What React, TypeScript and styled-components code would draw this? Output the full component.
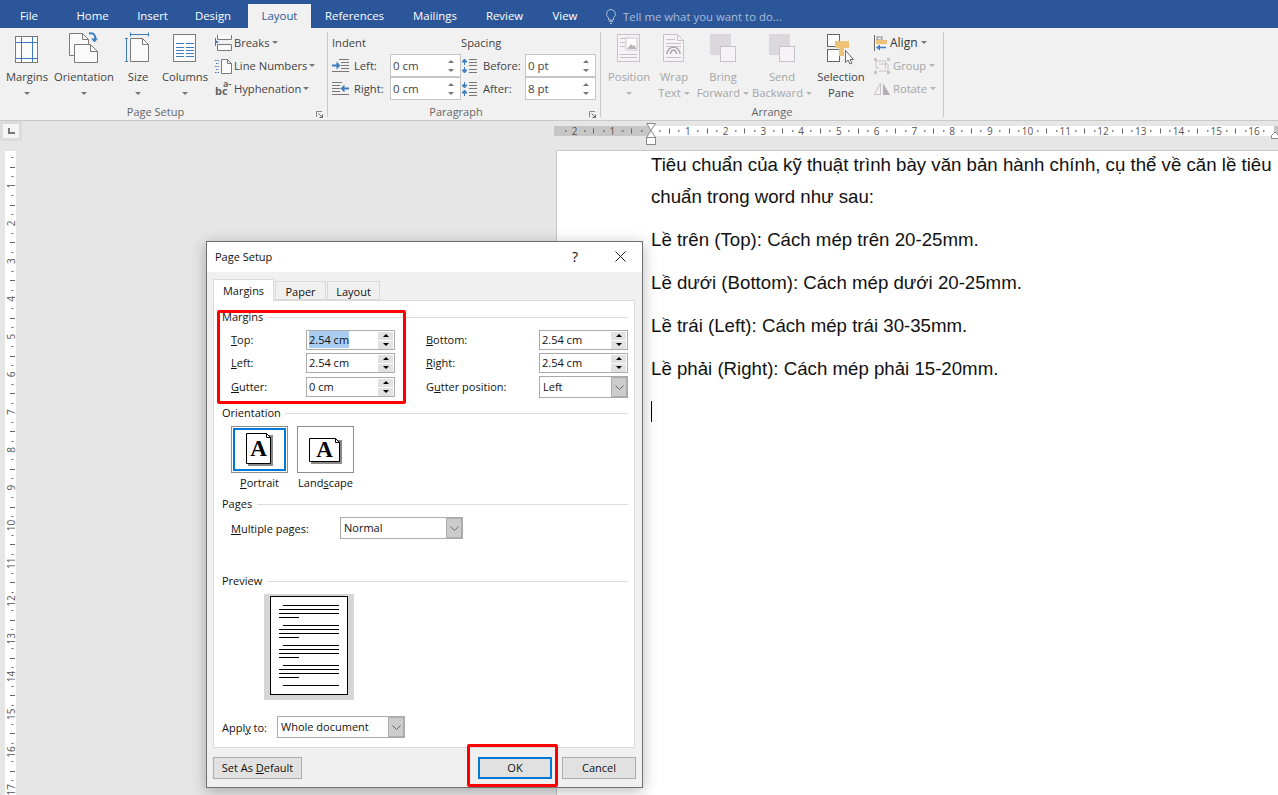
import React from "react";
import styled, { createGlobalStyle } from "styled-components";

const Global = createGlobalStyle`
  html, body { margin: 0; padding: 0; overflow: hidden; }
  body { font-family: "Open Sans", "Liberation Sans", sans-serif; }
  * { box-sizing: border-box; }
  svg { display: block; overflow: visible; }
`;

const Screen = styled.div`
  position: relative;
  width: 1278px;
  height: 795px;
  overflow: hidden;
  display: flex;
  flex-direction: column;
  background: #e6e6e6;
`;

/* ---------- title tabs ---------- */
const TabBar = styled.div`
  height: 28px;
  background: #2b579a;
  display: flex;
  align-items: flex-end;
  font-size: 11.4px;
`;
const RibbonTab = styled.div<{ $w: number; $active?: boolean }>`
  width: ${(p) => p.$w}px;
  height: 24px;
  line-height: 24px;
  text-align: center;
  color: ${(p) => (p.$active ? "#2b579a" : "#fff")};
  background: ${(p) => (p.$active ? "#f1f1f1" : "transparent")};
`;
const TellMe = styled.div`
  display: flex;
  align-items: center;
  height: 24px;
  gap: 7px;
  margin-left: 13px;
  color: #a9bcd8;
`;

/* ---------- ribbon ---------- */
const Ribbon = styled.div`
  height: 93px;
  background: #f1f1f1;
  border-bottom: 1px solid #c9c9c9;
  display: flex;
  padding-top: 4px;
  font-size: 11.2px;
  color: #444;
`;
const Group = styled.div<{ $w: number }>`
  width: ${(p) => p.$w}px;
  height: 85px;
  border-right: 1px solid #c9c9c9;
  display: flex;
  flex-direction: column;
`;
const GroupBody = styled.div`
  height: 72px;
  display: flex;
`;
const GroupFooter = styled.div`
  height: 13px;
  padding-top: 3px;
  display: flex;
  align-items: center;
`;
const GroupName = styled.div`
  flex: 1;
  text-align: center;
  font-size: 11px;
  line-height: 16px;
  color: #666;
`;
const Launcher = styled.div`
  width: 16px;
  padding-left: 5px;
  margin-top: 4px;
`;
const BigBtn = styled.div<{ $w: number; $off?: boolean }>`
  width: ${(p) => p.$w}px;
  display: flex;
  flex-direction: column;
  align-items: center;
  color: ${(p) => (p.$off ? "#a6a6a6" : "#444")};
  line-height: 16px;
  white-space: nowrap;
`;
const BigIcon = styled.div`
  height: 37px;
`;
const BtnLine = styled.div`
  height: 16px;
  display: flex;
  align-items: center;
  gap: 3px;
`;
const Caret = styled.span<{ $off?: boolean }>`
  display: inline-block;
  width: 0;
  height: 0;
  border-left: 3px solid transparent;
  border-right: 3px solid transparent;
  border-top: 3px solid ${(p) => (p.$off ? "#b5b5b5" : "#777")};
`;
const SmallStack = styled.div<{ $ml: number }>`
  margin-left: ${(p) => p.$ml}px;
  margin-top: -1px;
  display: flex;
  flex-direction: column;
`;
const SmallBtn = styled.div<{ $off?: boolean; $dark?: boolean }>`
  height: 23px;
  display: flex;
  align-items: center;
  gap: ${(p) => (p.$dark || p.$off ? 3 : 2)}px;
  white-space: nowrap;
  font-size: ${(p) => (p.$dark ? 12 : 11.2)}px;
  color: ${(p) => (p.$off ? "#a6a6a6" : p.$dark ? "#333" : "#444")};
`;
const ParaCol = styled.div<{ $w: number; $pl: number }>`
  width: ${(p) => p.$w}px;
  padding-left: ${(p) => p.$pl}px;
  display: flex;
  flex-direction: column;
`;
const ParaHead = styled.div`
  height: 22px;
  line-height: 22px;
`;
const ParaRow = styled.div`
  height: 23px;
  display: flex;
  align-items: center;
`;
const ParaIcon = styled.div<{ $w: number }>`
  width: ${(p) => p.$w}px;
  flex: none;
`;
const ParaLabel = styled.div<{ $w: number }>`
  width: ${(p) => p.$w}px;
  flex: none;
`;
const RibbonSpin = styled.div`
  width: 71px;
  height: 23px;
  background: #fff;
  border: 1px solid #c6c6c6;
  display: flex;
  align-items: center;
  justify-content: space-between;
  padding: 0 6px 0 2px;
  font-size: 11.5px;
  color: #444;
`;
const RibbonArrows = styled.div`
  display: flex;
  flex-direction: column;
  gap: 6px;
`;
const ArrowUp = styled.span<{ $c?: string }>`
  display: block;
  width: 0;
  height: 0;
  border-left: 3px solid transparent;
  border-right: 3px solid transparent;
  border-bottom: 3px solid ${(p) => p.$c || "#777"};
`;
const ArrowDown = styled.span<{ $c?: string }>`
  display: block;
  width: 0;
  height: 0;
  border-left: 3px solid transparent;
  border-right: 3px solid transparent;
  border-top: 3px solid ${(p) => p.$c || "#777"};
`;

/* ---------- workspace ---------- */
const RulerRow = styled.div`
  height: 29px;
  display: flex;
  justify-content: space-between;
`;
const Corner = styled.div`
  width: 22px;
  height: 20px;
  background: #dcdcdc;
  padding: 3px;
`;
const CornerFace = styled.div`
  width: 16px;
  height: 14px;
  background: #f5f5f5;
  display: flex;
  align-items: center;
  justify-content: center;
`;
const WorkBody = styled.div`
  flex: 1;
  display: flex;
  justify-content: space-between;
  min-height: 0;
`;
const VRulerWrap = styled.div`
  margin: 1px 0 0 5px;
  width: 11px;
`;
const Page = styled.div`
  width: 722px;
  background: #fff;
  border-left: 1px solid #c6c6c6;
  border-top: 1px solid #c6c6c6;
  padding-left: 94px;
  font-family: "Liberation Sans", Arial, sans-serif;
  font-size: 18.67px;
  line-height: 32px;
  color: #111;
`;
const DocText = styled.div`
  margin-top: -2px;
  width: 626px;
`;
const Para = styled.p`
  margin: 0 0 11px;
`;
const Cursor = styled.span`
  display: inline-block;
  width: 1px;
  height: 21px;
  margin-bottom: 4px;
  background: #000;
  vertical-align: middle;
`;

/* ---------- dialog ---------- */
const Dialog = styled.div`
  position: absolute;
  left: 206px;
  top: 241px;
  width: 437px;
  height: 547px;
  background: #f0f0f0;
  border: 1px solid #6f6f6f;
  box-shadow: 0 3px 14px rgba(0, 0, 0, 0.28);
  display: flex;
  flex-direction: column;
  font-size: 11px;
  color: #111;
`;
const DlgTitle = styled.div`
  height: 30px;
  flex: none;
  background: #fff;
  display: flex;
  align-items: center;
  padding: 0 0 2px 8px;
`;
const DlgTitleText = styled.div`
  flex: 1;
`;
const Help = styled.div`
  width: 30px;
  text-align: center;
  font-size: 14px;
  margin-right: 15px;
`;
const CloseBox = styled.div`
  width: 30px;
  margin-right: 7px;
  display: flex;
  justify-content: center;
`;
const DlgTabs = styled.div`
  height: 28px;
  flex: none;
  padding: 7px 0 0 6px;
  display: flex;
  align-items: flex-end;
`;
const DlgTab = styled.div<{ $w: number; $active?: boolean }>`
  width: ${(p) => p.$w}px;
  height: ${(p) => (p.$active ? 22 : 19)}px;
  line-height: ${(p) => (p.$active ? 22 : 19)}px;
  text-align: center;
  background: ${(p) => (p.$active ? "#fff" : "#f0f0f0")};
  border: 1px solid #d9d9d9;
  border-bottom: ${(p) => (p.$active ? "none" : "1px solid #d9d9d9")};
  margin-bottom: ${(p) => (p.$active ? -1 : 0)}px;
  margin-left: ${(p) => (p.$active ? 0 : 1)}px;
  position: relative;
  z-index: ${(p) => (p.$active ? 1 : 0)};
`;
const Panel = styled.div`
  height: 448px;
  flex: none;
  margin: 0 7px 0 6px;
  background: #fff;
  border: 1px solid #d9d9d9;
  padding: 8px 6px 0 8px;
  display: flex;
  flex-direction: column;
`;
const Section = styled.div<{ $mt?: number }>`
  height: 16px;
  flex: none;
  display: flex;
  align-items: center;
  gap: 5px;
  line-height: 16px;
  margin-top: ${(p) => p.$mt || 0}px;
  &::after {
    content: "";
    flex: 1;
    height: 1px;
    background: #dcdcdc;
  }
`;
const MarginGrid = styled.div`
  margin-top: 5px;
  padding-left: 9px;
  display: grid;
  grid-template-columns: 75px 89px 31px 113px 89px;
  grid-template-rows: 23px 24px 22px;
  align-items: start;
`;
const FieldLabel = styled.div<{ $col: number }>`
  grid-column: ${(p) => p.$col};
  line-height: 20px;
  white-space: nowrap;
`;
const Spin = styled.div<{ $col: number }>`
  grid-column: ${(p) => p.$col};
  height: 20px;
  border: 1px solid #ababab;
  background: #fff;
  display: flex;
  align-items: center;
  padding-left: 2px;
`;
const SpinValue = styled.div`
  flex: 1;
  padding-bottom: 1px;
`;
const Selected = styled.span`
  background: #a8cdf0;
  padding: 1px 0;
`;
const SpinBtns = styled.div`
  width: 15px;
  margin-right: 1px;
  display: flex;
  flex-direction: column;
  gap: 1px;
`;
const SpinBtn = styled.div`
  height: 8px;
  background: #e1e1e1;
  display: flex;
  align-items: center;
  justify-content: center;
`;
const Combo = styled.div<{ $w: number; $col?: number }>`
  width: ${(p) => p.$w}px;
  height: 22px;
  ${(p) => (p.$col ? `grid-column: ${p.$col}; margin-top: -1px;` : "")}
  border: 1px solid #ababab;
  background: #fff;
  display: flex;
  align-items: center;
  padding-left: 3px;
`;
const ComboText = styled.div`
  flex: 1;
  padding-bottom: 1px;
`;
const ComboBtn = styled.div`
  width: 17px;
  height: 20px;
  background: #ccc;
  border: 1px solid #fff;
  border-width: 0 0 0 1px;
  box-shadow: inset 0 0 0 1px #adadad;
  display: flex;
  align-items: center;
  justify-content: center;
`;
const OrientRow = styled.div`
  margin: 5px 0 0 9px;
  display: flex;
  gap: 9px;
`;
const OrientItem = styled.div`
  width: 57px;
  display: flex;
  flex-direction: column;
  align-items: center;
`;
const OrientBtn = styled.div`
  width: 57px;
  height: 47px;
  border: 1px solid #8f8f8f;
  background: #fff;
  padding: 1px;
  display: flex;
  align-items: center;
  justify-content: center;
`;
const OrientInner = styled.div<{ $sel?: boolean; $pt?: number }>`
  width: 100%;
  height: 100%;
  border: 2px solid ${(p) => (p.$sel ? "#0078d7" : "transparent")};
  padding-top: ${(p) => p.$pt || 0}px;
  display: flex;
  align-items: center;
  justify-content: center;
`;
const OrientLabel = styled.div`
  margin-top: 2px;
  line-height: 16px;
  white-space: nowrap;
`;
const PagesRow = styled.div`
  margin: 5px 0 0 9px;
  display: flex;
  align-items: center;
`;
const RowLabel = styled.div<{ $w: number }>`
  width: ${(p) => p.$w}px;
  flex: none;
`;
const PreviewBox = styled.div`
  margin: 5px 0 0 42px;
  width: 90px;
  height: 106px;
  background: #d6d6d6;
  padding: 2px 0 0 6px;
`;
const PreviewPage = styled.div`
  width: 78px;
  height: 99px;
  background: #fff;
  border: 1px solid #000;
`;
const ApplyRow = styled.div`
  margin-top: 16px;
  display: flex;
  align-items: center;
`;
const DlgFooter = styled.div`
  padding: 9px 6px 0;
  display: flex;
  gap: 10px;
`;
const DlgButton = styled.div<{ $w: number; $primary?: boolean; $right?: boolean }>`
  width: ${(p) => p.$w}px;
  height: 22px;
  background: #e1e1e1;
  border: ${(p) => (p.$primary ? "2px solid #0078d7" : "1px solid #adadad")};
  line-height: ${(p) => (p.$primary ? 18 : 20)}px;
  text-align: center;
  white-space: nowrap;
  ${(p) => (p.$right ? "margin-left: auto;" : "")}
`;
const RedBox = styled.div<{ $l: number; $t: number; $w: number; $h: number }>`
  position: absolute;
  left: ${(p) => p.$l}px;
  top: ${(p) => p.$t}px;
  width: ${(p) => p.$w}px;
  height: ${(p) => p.$h}px;
  border: 3px solid #f00;
  border-radius: 2px;
`;

/* ---------- icons ---------- */
const BLUE = "#3f7cbf";
const GR = "#7a7a7a";
const OFF = "#c9c3c9";

const MarginsIcon = () => (
  <svg width="24" height="30" viewBox="0 0 24 30">
    <rect x=".5" y="4.5" width="22" height="26" fill="#fbfbfb" stroke={GR} />
    <path d="M6.5 5v25M17.5 5v25M1 10.5h21M1 26.5h21" stroke={BLUE} fill="none" />
  </svg>
);
const OrientIcon = () => (
  <svg width="30" height="31" viewBox="0 0 30 31">
    <path d="M.5 1.5h13l6 6v16H.5z" fill="#fafafa" stroke={GR} />
    <path d="M13.5 1.5v6h6" fill="none" stroke={GR} />
    <path d="M5.5 12.5h16l7 7v11h-23z" fill="#fafafa" stroke={GR} />
    <path d="M21.5 12.5v7h7" fill="none" stroke={GR} />
    <path d="M20 1.5c5-1 7 2 6 6" fill="none" stroke={BLUE} strokeWidth="2" />
    <path d="M22 6.5h7l-3.500 4z" fill={BLUE} />
  </svg>
);
const SizeIcon = () => (
  <svg width="26" height="30" viewBox="0 0 26 30">
    <path d="M5.500 2.500h18M5.500.5v4M23.500.5v4M1.500 6.500v23M0 6.500h3M0 29.500h3" stroke={BLUE} fill="none" />
    <path d="M5.500 6.500h12l6 6v17h-18z" fill="#fafafa" stroke={GR} />
    <path d="M17.500 6.500v6h6" fill="none" stroke={GR} />
  </svg>
);
const ColumnsIcon = () => (
  <svg width="24" height="30" viewBox="0 0 24 30">
    <rect x=".5" y="2.500" width="22" height="27" fill="#fbfbfb" stroke={GR} />
    <path d="M3 11.500h8M13 11.500h8M3 15.500h8M13 15.500h8M3 18.500h8M13 18.500h8M3 21.500h8M13 21.500h8M3 24.500h8M13 24.500h8" stroke={BLUE} />
  </svg>
);
const BreaksIcon = () => (
  <svg width="17" height="16" viewBox="0 0 17 16">
    <path d="M2.500 0v4.500h14V0M2.500 15.500V9.500h14v6h-14z" fill="#fafafa" stroke={GR} />
    <path d="M0 5l4 2-4 2z" fill={BLUE} />
    <path d="M.5 3v8" stroke={BLUE} />
  </svg>
);
const LineNumIcon = () => (
  <svg width="17" height="16" viewBox="0 0 17 16">
    <path d="M6.500 1.500h6l4 4v10h-10z" fill="#fafafa" stroke={GR} />
    <path d="M12.500 1.500v4h4" fill="none" stroke={GR} />
    <path d="M0 2.500h4M1 5.500h3M0 8.500h4M1 11.500h3M0 14.500h4" stroke={BLUE} strokeDasharray="1.500 1" />
  </svg>
);
const HyphenIcon = () => (
  <svg width="17" height="17" viewBox="0 0 17 17">
    <text x="0" y="15" fontFamily="Open Sans, sans-serif" fontWeight="700" fontSize="11" fill="#666">bc</text>
    <text x="8" y="7" fontFamily="Open Sans, sans-serif" fontWeight="700" fontSize="9" fill="#666">a-</text>
  </svg>
);
const LauncherIcon = () => (
  <svg width="7" height="7" viewBox="0 0 7 7">
    <path d="M.5 6V.5H6" fill="none" stroke="#888" />
    <path d="M2.500 2.500L6 6M6.500 3.500v3h-3" fill="none" stroke="#666" />
  </svg>
);
const IndentL = () => (
  <svg width="17" height="13" viewBox="0 0 17 13">
    <path d="M7 .5h10M9 3.500h8M9 6.500h8M9 9.500h8M0 12.500h17" stroke="#777" />
    <path d="M0 6.500h5" stroke={BLUE} strokeWidth="2" />
    <path d="M4.500 2.500l4 4-4 4z" fill={BLUE} />
  </svg>
);
const IndentR = () => (
  <svg width="17" height="13" viewBox="0 0 17 13">
    <path d="M0 .5h10M0 3.500h8M0 6.500h8M0 9.500h8M0 12.500h17" stroke="#777" />
    <path d="M12 6.500h5" stroke={BLUE} strokeWidth="2" />
    <path d="M12.500 2.500l-4 4 4 4z" fill={BLUE} />
  </svg>
);
const SpaceIcon = ({ before }: { before: boolean }) => (
  <svg width="16" height="16" viewBox="0 0 16 16">
    <path d="M8 1.500h8M8 4.500h8M8 7.500h8M8 11.500h8M8 14.500h8" stroke="#777" />
    {before ? (
      <path d="M3.500 7V3M3.500 1L6 4H1zM3.500 15l2.500-3H1zM3.500 9v4" fill={BLUE} stroke={BLUE} />
    ) : (
      <path d="M3.500 1v4M3.500 7L6 4H1zM3.500 9L6 12H1zM3.500 11v4" fill={BLUE} stroke={BLUE} />
    )}
  </svg>
);
const PositionIcon = () => (
  <svg width="24" height="30" viewBox="0 0 24 30">
    <rect x=".5" y="2.500" width="22" height="27" fill="#f6f2f6" stroke={OFF} />
    <path d="M3 6.500h6M3 10.500h5M3 14.500h5M3 22.500h17M3 25.500h17" stroke={OFF} />
    <rect x="9" y="6" width="11" height="12" fill="#fff" stroke={OFF} />
    <path d="M10 17l4-5 2 2 1.500-1 2 4z" fill="#bbb4bb" />
  </svg>
);
const WrapIcon = () => (
  <svg width="22" height="30" viewBox="0 0 22 30">
    <path d="M.5 2.500h14l6 6v21H.5z" fill="#f6f2f6" stroke={OFF} />
    <path d="M14.500 2.500v6h6" fill="none" stroke={OFF} />
    <path d="M3 7.500h9M3 11.500h15M3 14.500h15M3 25.500h15" stroke={OFF} />
    <path d="M4 22c0-9 13-9 13 0M7.500 22c0-5 6-5 6 0" fill="none" stroke="#aba5ab" strokeWidth="1.500" />
  </svg>
);
const StackIcon = () => (
  <svg width="27" height="30" viewBox="0 0 27 30">
    <rect x="0" y="2" width="21" height="21" fill="#dbd7db" />
    <rect x="10.500" y="14.500" width="15" height="15" fill="#f6f2f6" stroke={OFF} />
  </svg>
);
const SelPaneIcon = () => (
  <svg width="28" height="32" viewBox="0 0 28 32">
    <rect x=".5" y="2.500" width="12" height="12" fill="#fff" stroke="#666" />
    <rect x=".5" y="17.500" width="12" height="12" fill="#fff" stroke="#666" />
    <path d="M8 9h14v7h-5v8h-5v-8H8z" fill="#ecc378" />
    <path d="M18.500 18.500v12l2.500-2.500 2 4 2-1-2-3.500h3.500z" fill="#fff" stroke="#666" />
  </svg>
);
const AlignIcon = () => (
  <svg width="13" height="16" viewBox="0 0 13 16">
    <path d="M.5 0v16" stroke="#666" />
    <rect x="3" y="2" width="5" height="3" fill="none" stroke="#888" />
    <rect x="2" y="5" width="11" height="4" fill="#ecc378" />
    <path d="M12 12.500H5" stroke={BLUE} strokeWidth="1.500" />
    <path d="M2 12.500l4-3v6z" fill={BLUE} />
  </svg>
);
const GroupIcon = () => (
  <svg width="16" height="16" viewBox="0 0 16 16">
    <path d="M2.500 3h9v7.500M5 13h9M5 6h9v7M2 3v7h3" fill="none" stroke={OFF} />
    <path d="M0 0h3v3H0zM13 0h3v3h-3zM0 13h3v3H0zM13 13h3v3h-3z" fill={OFF} />
  </svg>
);
const RotateIcon = () => (
  <svg width="16" height="13" viewBox="0 0 16 13">
    <path d="M6.500 1L.5 12.500h6z" fill="#f6f2f6" stroke={OFF} />
    <path d="M9 1v12h7z" fill="#b5afb5" />
  </svg>
);
const Bulb = () => (
  <svg width="10" height="15" viewBox="0 0 10 15">
    <path d="M5 .5a4.500 4.500 0 0 0-2.500 8.200V11h5V8.700A4.500 4.500 0 0 0 5 .500zM3 12.500h4M4 14.500h2" fill="none" stroke="#a9bcd8" />
  </svg>
);

const SPIN_ARROW = "#000";
const SpinField = ({ col, value, sel }: { col: number; value: string; sel?: boolean }) => (
  <Spin $col={col}>
    <SpinValue>{sel ? <Selected>{value}</Selected> : value}</SpinValue>
    <SpinBtns>
      <SpinBtn><ArrowUp $c={SPIN_ARROW} /></SpinBtn>
      <SpinBtn><ArrowDown $c={SPIN_ARROW} /></SpinBtn>
    </SpinBtns>
  </Spin>
);
const Chevron = () => (
  <svg width="9" height="5" viewBox="0 0 9 5">
    <path d="M.5.500l4 4 4-4" fill="none" stroke="#666" />
  </svg>
);
const ComboField = ({ w, col, value }: { w: number; col?: number; value: string }) => (
  <Combo $w={w} $col={col}>
    <ComboText>{value}</ComboText>
    <ComboBtn><Chevron /></ComboBtn>
  </Combo>
);
const RSpin = ({ value }: { value: string }) => (
  <RibbonSpin>
    {value}
    <RibbonArrows><ArrowUp /><ArrowDown /></RibbonArrows>
  </RibbonSpin>
);

const PageGlyph = ({ land }: { land?: boolean }) => {
  const w = land ? 31 : 25;
  const h = land ? 24 : 31;
  return (
    <svg width={w + 2} height={h + 2} viewBox={`0 0 ${w + 2} ${h + 2}`}>
      <path d={`M2 2H${w + 2}V${h + 2}H2z`} fill="#8a8a8a" />
      <path d={`M.5.500H${w - 4.5}L${w - 0.5} 4.500V${h - 0.5}H.500z`} fill="#fff" stroke="#000" />
      <path d={`M${w - 4.5}.500V4.500H${w - 0.5}`} fill="none" stroke="#000" />
      <text x={w / 2} y={land ? 19 : 23} textAnchor="middle" fontFamily="Liberation Serif, serif" fontWeight="700" fontSize="23" fill="#000">A</text>
    </svg>
  );
};

/* ---------- rulers ---------- */
const U = 37.75;
const HRuler = () => {
  const W = 724;
  const zero = 96;
  const marks: React.ReactNode[] = [];
  for (let i = -10; i < 70; i++) {
    const x = zero + (i * U) / 4;
    if (x < 2 || x > W - 6) continue;
    const m = ((i % 4) + 4) % 4;
    if (i === 0) continue;
    if (m === 0) {
      marks.push(
        <text key={i} x={x} y={13.5} textAnchor="middle" fontSize="10" fontFamily="Open Sans, sans-serif" fill="#555">
          {Math.abs(i / 4)}
        </text>
      );
    } else if (m === 2) {
      marks.push(<path key={i} d={`M${Math.round(x) + 0.5} 7.500v5`} stroke="#666" />);
    } else {
      marks.push(<path key={i} d={`M${Math.round(x)} 10h1.500`} stroke="#666" strokeWidth="1.500" />);
    }
  }
  return (
    <svg width={W} height={29} viewBox={`0 0 ${W} 29`}>
      <rect x="0" y="5" width={W} height="10" fill="#fff" />
      <rect x="0" y="5" width={zero} height="10" fill="#c6c6c6" />
      <rect x={W - 4} y="5" width="4" height="10" fill="#c6c6c6" />
      {marks}
      <path d="M92.500 2.500h9l-4.500 7 4.500 7h-9l4.500-7z" fill="#fff" stroke="#888" />
      <rect x="92.500" y="16.500" width="9" height="7" fill="#fff" stroke="#888" />
      <path d="M717.500 17.500v-3l3.500-3.500 3.500 3.500v3z" fill="#fff" stroke="#888" />
    </svg>
  );
};
const VRuler = () => {
  const H = 644;
  const zero = -3;
  const marks: React.ReactNode[] = [];
  for (let i = 1; i < 72; i++) {
    const y = zero + (i * U) / 4;
    if (y > H) continue;
    const m = i % 4;
    if (m === 0) {
      marks.push(
        <text key={i} transform={`translate(10 ${y}) rotate(-90)`} textAnchor="middle" fontSize="10" fontFamily="Open Sans, sans-serif" fill="#555">
          {i / 4}
        </text>
      );
    } else if (m === 2) {
      marks.push(<path key={i} d={`M5 ${Math.round(y) + 0.5}h5`} stroke="#666" />);
    } else {
      marks.push(<path key={i} d={`M6.500 ${Math.round(y) + 0.5}h2`} stroke="#666" />);
    }
  }
  return (
    <svg width={11} height={H} viewBox={`0 0 11 ${H}`}>
      <rect width="11" height={H} fill="#fff" />
      {marks}
    </svg>
  );
};

const PreviewLines = () => {
  const lines: string[] = [];
  [0, 1, 2, 3].forEach((g) => {
    const o = g * 20;
    lines.push(`M12 ${8.5 + o}H68M8 ${12.5 + o}H68M8 ${16.5 + o}H68M8 ${20.5 + o}H28`);
  });
  lines.push("M12 88.500H68");
  return (
    <svg width="76" height="97" viewBox="0 0 76 97">
      <path d={lines.join("")} stroke="#000" fill="none" />
    </svg>
  );
};

const tabs: [string, number][] = [
  ["File", 58], ["Home", 69], ["Insert", 51], ["Design", 70], ["Layout", 63],
  ["References", 87], ["Mailings", 74], ["Review", 65], ["View", 56],
];

export default function App() {
  return (
    <Screen>
      <Global />
      <TabBar>
        {tabs.map(([t, w]) => (
          <RibbonTab key={t} $w={w} $active={t === "Layout"}>{t}</RibbonTab>
        ))}
        <TellMe><Bulb />Tell me what you want to do...</TellMe>
      </TabBar>
      <Ribbon>
        <Group $w={328}>
          <GroupBody>
            <BigBtn $w={54}>
              <BigIcon><MarginsIcon /></BigIcon>
              <BtnLine>Margins</BtnLine>
              <BtnLine><Caret /></BtnLine>
            </BigBtn>
            <BigBtn $w={60}>
              <BigIcon><OrientIcon /></BigIcon>
              <BtnLine>Orientation</BtnLine>
              <BtnLine><Caret /></BtnLine>
            </BigBtn>
            <BigBtn $w={48}>
              <BigIcon><SizeIcon /></BigIcon>
              <BtnLine>Size</BtnLine>
              <BtnLine><Caret /></BtnLine>
            </BigBtn>
            <BigBtn $w={46}>
              <BigIcon><ColumnsIcon /></BigIcon>
              <BtnLine>Columns</BtnLine>
              <BtnLine><Caret /></BtnLine>
            </BigBtn>
            <SmallStack $ml={7}>
              <SmallBtn><BreaksIcon />Breaks<Caret /></SmallBtn>
              <SmallBtn><LineNumIcon />Line Numbers<Caret /></SmallBtn>
              <SmallBtn><HyphenIcon />Hyphenation<Caret /></SmallBtn>
            </SmallStack>
          </GroupBody>
          <GroupFooter>
            <GroupName>Page Setup</GroupName>
            <Launcher><LauncherIcon /></Launcher>
          </GroupFooter>
        </Group>
        <Group $w={273}>
          <GroupBody>
            <ParaCol $w={133} $pl={4}>
              <ParaHead>Indent</ParaHead>
              <ParaRow>
                <ParaIcon $w={22}><IndentL /></ParaIcon>
                <ParaLabel $w={36}>Left:</ParaLabel>
                <RSpin value="0 cm" />
              </ParaRow>
              <ParaRow>
                <ParaIcon $w={22}><IndentR /></ParaIcon>
                <ParaLabel $w={36}>Right:</ParaLabel>
                <RSpin value="0 cm" />
              </ParaRow>
            </ParaCol>
            <ParaCol $w={136} $pl={0}>
              <ParaHead>Spacing</ParaHead>
              <ParaRow>
                <ParaIcon $w={22}><SpaceIcon before /></ParaIcon>
                <ParaLabel $w={42}>Before:</ParaLabel>
                <RSpin value="0 pt" />
              </ParaRow>
              <ParaRow>
                <ParaIcon $w={22}><SpaceIcon before={false} /></ParaIcon>
                <ParaLabel $w={42}>After:</ParaLabel>
                <RSpin value="8 pt" />
              </ParaRow>
            </ParaCol>
          </GroupBody>
          <GroupFooter>
            <GroupName>Paragraph</GroupName>
            <Launcher><LauncherIcon /></Launcher>
          </GroupFooter>
        </Group>
        <Group $w={343}>
          <GroupBody>
            <BigBtn $w={56} $off>
              <BigIcon><PositionIcon /></BigIcon>
              <BtnLine>Position</BtnLine>
              <BtnLine><Caret $off /></BtnLine>
            </BigBtn>
            <BigBtn $w={34} $off>
              <BigIcon><WrapIcon /></BigIcon>
              <BtnLine>Wrap</BtnLine>
              <BtnLine>Text <Caret $off /></BtnLine>
            </BigBtn>
            <BigBtn $w={64} $off>
              <BigIcon><StackIcon /></BigIcon>
              <BtnLine>Bring</BtnLine>
              <BtnLine>Forward <Caret $off /></BtnLine>
            </BigBtn>
            <BigBtn $w={54} $off>
              <BigIcon><StackIcon /></BigIcon>
              <BtnLine>Send</BtnLine>
              <BtnLine>Backward <Caret $off /></BtnLine>
            </BigBtn>
            <BigBtn $w={64}>
              <BigIcon><SelPaneIcon /></BigIcon>
              <BtnLine>Selection</BtnLine>
              <BtnLine>Pane</BtnLine>
            </BigBtn>
            <SmallStack $ml={1}>
              <SmallBtn $dark><AlignIcon />Align<Caret /></SmallBtn>
              <SmallBtn $off><GroupIcon />Group<Caret $off /></SmallBtn>
              <SmallBtn $off><RotateIcon />Rotate<Caret $off /></SmallBtn>
            </SmallStack>
          </GroupBody>
          <GroupFooter>
            <GroupName>Arrange</GroupName>
          </GroupFooter>
        </Group>
      </Ribbon>
      <RulerRow>
        <Corner>
          <CornerFace>
            <svg width="7" height="6" viewBox="0 0 7 6"><path d="M1 0v5h6" fill="none" stroke="#777" strokeWidth="2" /></svg>
          </CornerFace>
        </Corner>
        <HRuler />
      </RulerRow>
      <WorkBody>
        <VRulerWrap><VRuler /></VRulerWrap>
        <Page>
          <DocText>
            <Para>Tiêu chuẩn của kỹ thuật trình bày văn bản hành chính, cụ thể về căn lề tiêu chuẩn trong word như sau:</Para>
            <Para>Lề trên (Top): Cách mép trên 20-25mm.</Para>
            <Para>Lề dưới (Bottom): Cách mép dưới 20-25mm.</Para>
            <Para>Lề trái (Left): Cách mép trái 30-35mm.</Para>
            <Para>Lề phải (Right): Cách mép phải 15-20mm.</Para>
            <Para><Cursor /></Para>
          </DocText>
        </Page>
      </WorkBody>

      <Dialog>
        <DlgTitle>
          <DlgTitleText>Page Setup</DlgTitleText>
          <Help>?</Help>
          <CloseBox>
            <svg width="11" height="11" viewBox="0 0 11 11"><path d="M.5.500l10 10M10.500.500l-10 10" stroke="#222" /></svg>
          </CloseBox>
        </DlgTitle>
        <DlgTabs>
          <DlgTab $w={61} $active>Margins</DlgTab>
          <DlgTab $w={51}>Paper</DlgTab>
          <DlgTab $w={53}>Layout</DlgTab>
        </DlgTabs>
        <Panel>
          <Section>Margins</Section>
          <MarginGrid>
            <FieldLabel $col={1}><u>T</u>op:</FieldLabel>
            <SpinField col={2} value="2.54 cm" sel />
            <FieldLabel $col={4}><u>B</u>ottom:</FieldLabel>
            <SpinField col={5} value="2.54 cm" />
            <FieldLabel $col={1}><u>L</u>eft:</FieldLabel>
            <SpinField col={2} value="2.54 cm" />
            <FieldLabel $col={4}><u>R</u>ight:</FieldLabel>
            <SpinField col={5} value="2.54 cm" />
            <FieldLabel $col={1}><u>G</u>utter:</FieldLabel>
            <SpinField col={2} value="0 cm" />
            <FieldLabel $col={4}>G<u>u</u>tter position:</FieldLabel>
            <ComboField col={5} w={89} value="Left" />
          </MarginGrid>
          <Section $mt={6}>Orientation</Section>
          <OrientRow>
            <OrientItem>
              <OrientBtn><OrientInner $sel><PageGlyph /></OrientInner></OrientBtn>
              <OrientLabel><u>P</u>ortrait</OrientLabel>
            </OrientItem>
            <OrientItem>
              <OrientBtn><OrientInner $pt={2}><PageGlyph land /></OrientInner></OrientBtn>
              <OrientLabel>Land<u>s</u>cape</OrientLabel>
            </OrientItem>
          </OrientRow>
          <Section $mt={5}>Pages</Section>
          <PagesRow>
            <RowLabel $w={109}><u>M</u>ultiple pages:</RowLabel>
            <ComboField w={123} value="Normal" />
          </PagesRow>
          <Section $mt={34}>Preview</Section>
          <PreviewBox>
            <PreviewPage><PreviewLines /></PreviewPage>
          </PreviewBox>
          <ApplyRow>
            <RowLabel $w={55}>Appl<u>y</u> to:</RowLabel>
            <ComboField w={128} value="Whole document" />
          </ApplyRow>
        </Panel>
        <DlgFooter>
          <DlgButton $w={89}>Set As <u>D</u>efault</DlgButton>
          <DlgButton $w={74} $primary $right>OK</DlgButton>
          <DlgButton $w={74}>Cancel</DlgButton>
        </DlgFooter>
        <RedBox $l={10} $t={68} $w={189} $h={94} />
        <RedBox $l={260} $t={502} $w={91} $h={43} />
      </Dialog>
    </Screen>
  );
}
